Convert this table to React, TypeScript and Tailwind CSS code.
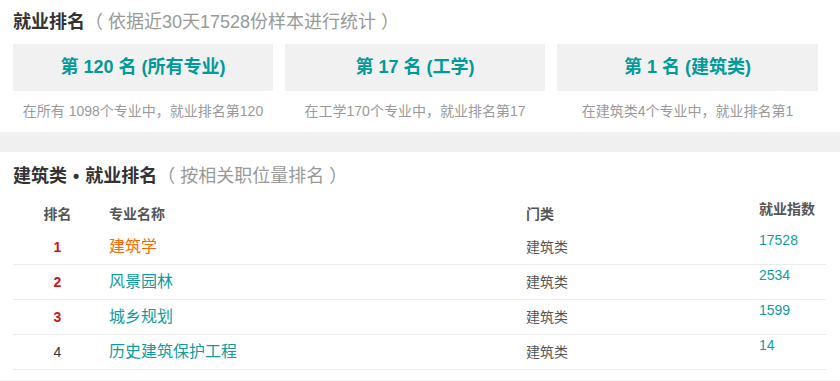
import React from 'react';

interface RankCard {
  headline: string;
  desc: string;
}

interface MajorRow {
  rank: number;
  name: string;
  category: string;
  index: number;
}

const cards: RankCard[] = [
  { headline: '第 120 名 (所有专业)', desc: '在所有 1098个专业中，就业排名第120' },
  { headline: '第 17 名 (工学)', desc: '在工学170个专业中，就业排名第17' },
  { headline: '第 1 名 (建筑类)', desc: '在建筑类4个专业中，就业排名第1' },
];

const rows: MajorRow[] = [
  { rank: 1, name: '建筑学', category: '建筑类', index: 17528 },
  { rank: 2, name: '风景园林', category: '建筑类', index: 2534 },
  { rank: 3, name: '城乡规划', category: '建筑类', index: 1599 },
  { rank: 4, name: '历史建筑保护工程', category: '建筑类', index: 14 },
];

const font = { fontFamily: '"Liberation Sans", "Noto Sans CJK SC", sans-serif' };

export default function App() {
  return (
    <div className="w-[840px] h-[381px] overflow-hidden bg-white" style={font}>
      {/* 1. Overall ranking */}
      <div className="px-[13px] pt-[10px]">
        <div className="h-[25px] flex items-center text-[18px] whitespace-nowrap">
          <span className="font-bold text-[#333]">就业排名</span>
          <span className="text-[#999]">（ 依据近30天17528份样本进行统计 ）</span>
        </div>
        <div className="mt-[9px] grid grid-cols-[260px_260px_261px] gap-x-[12px]">
          {cards.map((c) => (
            <div key={c.headline}>
              <div className="h-[47px] bg-[#f1f1f1] flex items-center justify-center text-[18px] font-bold text-[#009a9a]">
                {c.headline}
              </div>
              <div className="h-[41px] flex items-center justify-center text-[14px] text-[#999]">
                {c.desc}
              </div>
            </div>
          ))}
        </div>
      </div>

      <div className="h-[20px] bg-[#f0f0f0]" />

      {/* 2. Category ranking table */}
      <div className="pl-[13px] pr-[14px] pt-[12px]">
        <div className="h-[25px] flex items-center text-[18px] whitespace-nowrap">
          <span className="font-bold text-[#333]">
            建筑类<span className="mx-[6px]">•</span>就业排名
          </span>
          <span className="text-[#999]">（ 按相关职位量排名 ）</span>
        </div>

        <div className="grid grid-cols-[89px_424px_233px_1fr] h-[41px] text-[14px] font-bold text-[#555] leading-[18px]">
          <div className="pt-[16px] text-center">排名</div>
          <div className="pt-[16px] pl-[7px]">专业名称</div>
          <div className="pt-[16px]">门类</div>
          <div className="pt-[11px]">就业指数</div>
        </div>

        {rows.map((r) => (
          <div
            key={r.rank}
            className="grid grid-cols-[89px_424px_233px_1fr] h-[35px] border-b border-[#ebebeb]"
          >
            <div
              className={`flex items-center justify-center text-[14px] ${
                r.rank <= 3 ? 'font-bold text-[#c8161e]' : 'text-[#333]'
              }`}
            >
              {r.rank}
            </div>
            <div
              className={`flex items-center pl-[7px] text-[16px] ${
                r.rank === 1 ? 'text-[#ff6600]' : 'text-[#109c9c]'
              }`}
            >
              {r.name}
            </div>
            <div className="flex items-center text-[14px] text-[#555]">{r.category}</div>
            <div className="pt-[2px] leading-[16px] text-[14px] text-[#109c9c]">{r.index}</div>
          </div>
        ))}
      </div>

      <div className="mt-[10px] h-[20px] bg-[#f0f0f0]" />
    </div>
  );
}
